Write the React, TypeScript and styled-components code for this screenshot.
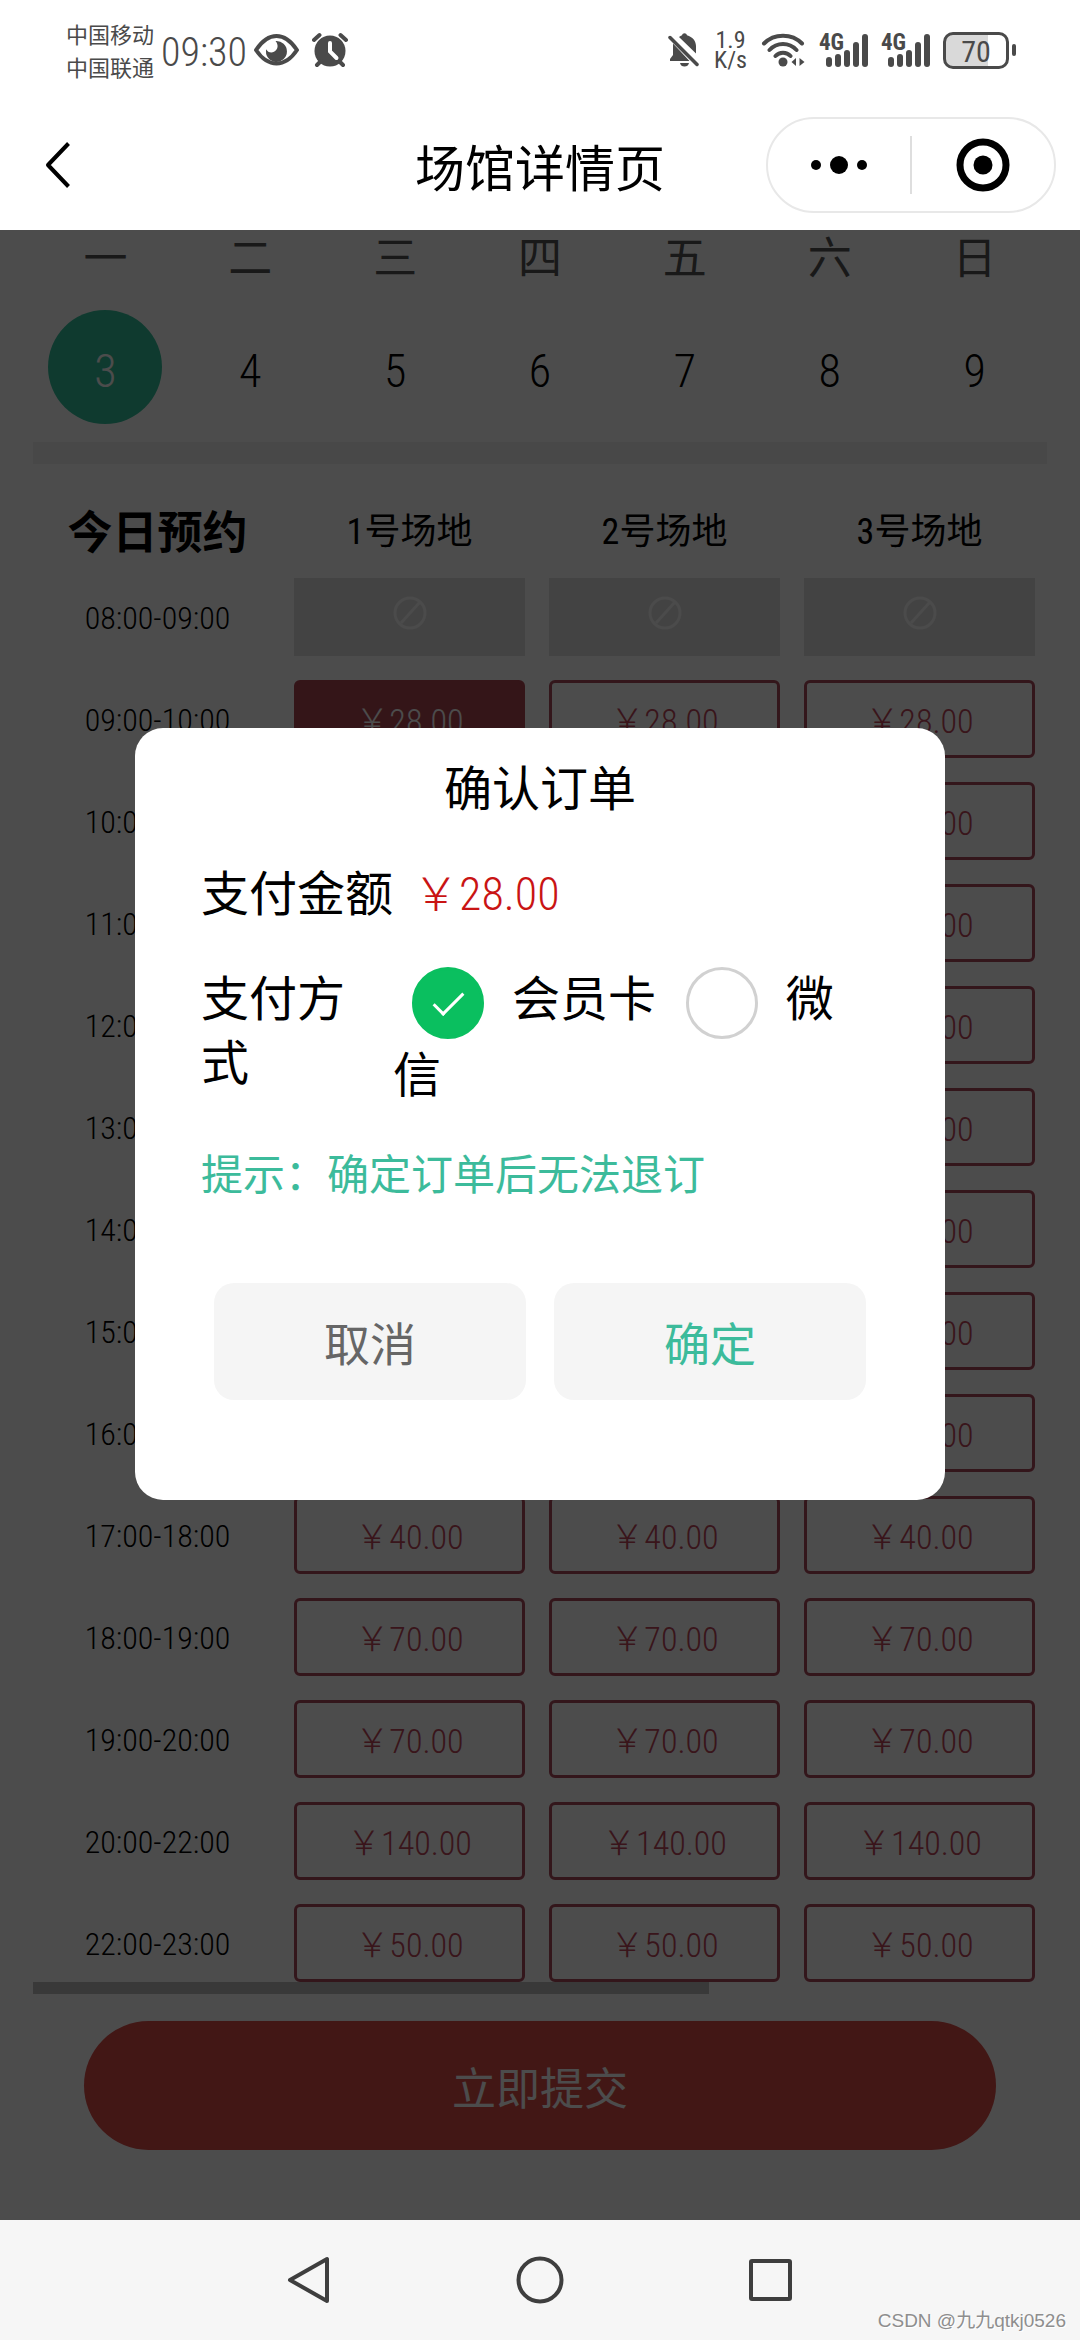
import React, { useState } from "react";
import styled, { createGlobalStyle } from "styled-components";

const GlobalStyle = createGlobalStyle`
  *, *::before, *::after { box-sizing: border-box; }
  body { margin: 0; background: #fff; }
  button, input { font: inherit; }
  button { margin: 0; padding: 0; border: 0; background: none; color: inherit; }
`;

const INK = "#4a4a4a";
const TEAL = "#3cbb9b";

const Screen = styled.div`
  display: flex;
  flex-direction: column;
  min-height: 100vh;
  font-family: "Noto Sans CJK SC", sans-serif;
  font-size: 48px;
  line-height: 64px;
  color: #000;
`;

/* condensed figures that share a line with Chinese text */
const Num = styled.span`
  font-family: "Roboto Condensed", "Liberation Sans Narrow", "Noto Sans CJK SC", sans-serif;
  line-height: 1;
`;

/* ---------- system status bar ---------- */

const StatusBar = styled.header`
  display: flex;
  align-items: center;
  justify-content: space-between;
  height: 100px;
  padding: 0 64px 0 66px;
  color: ${INK};
`;

const StatusGroup = styled.div<{ $gap: number }>`
  display: flex;
  align-items: center;
  gap: ${(p) => p.$gap}px;
`;

const Carriers = styled.div`
  display: flex;
  flex-direction: column;
  font-size: 22px;
  line-height: 33px;
`;

const Clock = styled.time`
  font-size: 40px;
  line-height: 44px;
  font-weight: 300;
`;

const NetSpeed = styled(Num)`
  display: flex;
  flex-direction: column;
  align-items: center;
  font-size: 24px;
  line-height: 20px;
`;

const Battery = styled.div`
  display: flex;
  align-items: center;
  gap: 3px;

  &::after {
    content: "";
    width: 4px;
    height: 12px;
    border-radius: 2px;
    background: ${INK};
  }
`;

const BatteryBody = styled(Num)`
  width: 66px;
  height: 37px;
  padding: 0 2px;
  border: 3px solid ${INK};
  border-radius: 10px;
  background: linear-gradient(90deg, #d9d9d9 70%, #fff 70%);
  font-size: 30px;
  line-height: 33px;
  text-align: center;
`;

/* ---------- mini program title bar ---------- */

const TitleBar = styled.div`
  display: grid;
  grid-template-columns: 1fr auto 1fr;
  align-items: center;
  height: 130px;
  padding: 0 24px;
`;

const BackButton = styled.button`
  display: flex;
  justify-self: start;
  margin-left: 20px;
`;

const PageTitle = styled.h1`
  margin: 0;
  font-size: 50px;
  font-weight: 400;
`;

const Capsule = styled.div`
  display: flex;
  align-items: center;
  justify-self: end;
  width: 290px;
  height: 96px;
  border: 2px solid #e8e8e8;
  border-radius: 48px;
`;

const CapsuleButton = styled.button`
  display: flex;
  flex: 1;
  align-items: center;
  justify-content: center;

  & + & {
    border-left: 2px solid #dedede;
    height: 58px;
  }
`;

/* ---------- booking page ---------- */

const Page = styled.main`
  position: relative;
  display: flex;
  flex: 1;
  flex-direction: column;
  padding: 0 33px;
  background: #fff;
`;

const Week = styled.div`
  display: grid;
  grid-template-columns: repeat(7, 1fr);
  justify-items: center;
`;

const Weekday = styled.span`
  font-size: 44px;
  line-height: 50px;
  color: #555;
`;

const Day = styled.button<{ $active: boolean }>`
  width: 114px;
  height: 114px;
  margin: 30px 0 18px;
  border-radius: 50%;
  background: ${(p) => (p.$active ? "#35c19d" : "none")};
  color: ${(p) => (p.$active ? "#fff" : "#000")};
  font-size: 46px;
  font-weight: 300;
`;

const Divider = styled.div`
  height: 22px;
  background: #f0f0f0;
`;

const Slots = styled.table`
  width: 100%;
  margin-top: 43px;
  border-collapse: collapse;
  table-layout: fixed;
`;

const CornerHead = styled.th`
  width: 249px;
  padding: 0 0 2px;
  font-size: 45px;
  line-height: 44px;
  font-weight: 700;
`;

const CourtHead = styled.th`
  padding: 0 0 4px;
  font-size: 36px;
  line-height: 42px;
  font-weight: 400;
`;

const TimeHead = styled.th`
  padding: 20px 0 0;
  font-size: 32px;
  line-height: 44px;
  font-weight: 300;
`;

const SlotCell = styled.td`
  height: 102px;
  padding: 24px 12px 0;
`;

const SlotButton = styled.button<{ $state: "free" | "picked" | "closed" }>`
  display: block;
  width: 100%;
  height: 78px;
  border: 3px solid ${(p) => ({ free: "#ac4a5c", picked: "#ad4653", closed: "#e0e0e0" })[p.$state]};
  border-radius: ${(p) => (p.$state === "closed" ? 0 : 6)}px;
  background: ${(p) => ({ free: "none", picked: "#ad4653", closed: "#e0e0e0" })[p.$state]};
  color: ${(p) => (p.$state === "picked" ? "#fff" : "#c0485a")};
  font-size: 34px;
  line-height: 44px;
  font-weight: 300;
`;

const ScrollThumb = styled.div`
  width: 66.67%;
  height: 12px;
  background: #bebebe;
`;

const SubmitButton = styled.button`
  height: 129px;
  margin: 27px 51px 70px;
  border-radius: 65px;
  background: #dc4d49;
  color: #fff;
  font-size: 44px;
`;

/* ---------- confirm dialog ---------- */

const Mask = styled.div`
  position: absolute;
  inset: 0;
  display: flex;
  align-items: flex-start;
  justify-content: center;
  padding-top: 498px;
  background: rgba(0, 0, 0, 0.7);
`;

const Dialog = styled.form`
  display: flex;
  flex-direction: column;
  gap: 41px;
  width: 75%;
  padding: 25px 66px 100px;
  border-radius: 28px;
  background: #fff;
`;

const DialogTitle = styled.h2`
  margin: 0;
  font-size: 48px;
  font-weight: 400;
  text-align: center;
`;

const Field = styled.div`
  display: flex;
`;

const Amount = styled.span`
  margin-left: 20px;
  color: #c91414;
  font-size: 46px;
  font-weight: 300;
`;

const MethodName = styled.span`
  flex: none;
  width: 180px;
  margin-right: 12px;
`;

const Methods = styled.div`
  flex: 1;
`;

const Radio = styled.input`
  position: relative;
  width: 72px;
  height: 72px;
  margin: 0 28px 0 19px;
  border: 3px solid #d1d1d1;
  border-radius: 50%;
  background: #fff;
  appearance: none;
  vertical-align: middle;

  &:checked {
    border-color: #0abf5f;
    background: #0abf5f;
  }

  &:checked::after {
    content: "";
    position: absolute;
    top: 15px;
    left: 26px;
    width: 15px;
    height: 30px;
    border: solid #fff;
    border-width: 0 3px 3px 0;
    transform: rotate(45deg);
  }
`;

const Hint = styled.p`
  margin: 0;
  color: ${TEAL};
  font-size: 42px;
  line-height: 56px;
`;

const Actions = styled.div`
  display: flex;
  gap: 28px;
  margin: 42px 13px 0;
`;

const ActionButton = styled.button<{ $primary?: boolean }>`
  flex: 1;
  height: 117px;
  border-radius: 20px;
  background: #f5f5f5;
  color: ${(p) => (p.$primary ? TEAL : "#666")};
  font-size: 46px;
`;

/* ---------- system navigation ---------- */

const SystemNav = styled.nav`
  position: relative;
  display: flex;
  align-items: center;
  justify-content: center;
  gap: 182px;
  height: 120px;
  background: #f6f6f6;
`;

const NavButton = styled.button`
  display: flex;
`;

const Watermark = styled.span`
  position: absolute;
  right: 14px;
  bottom: 6px;
  font-family: "Liberation Sans", "Noto Sans CJK SC", sans-serif;
  font-size: 19px;
  line-height: 26px;
  color: #8e8e8e;
  text-shadow: 1px 1px 0 #fff;
`;

/* ---------- icons ---------- */

const EyeIcon = () => (
  <svg width="45" height="32" viewBox="0 0 45 32" aria-hidden="true">
    <path d="M2 16C8 7 15 2 22.500 2S37 7 43 16C37 25 30 29.500 22.500 29.500S8 25 2 16Z" fill="none" stroke={INK} strokeWidth="4" strokeLinejoin="round" />
    <path d="M21.500 7A10.500 10.500 0 1 1 12.200 15.200C13.500 18 17 19.500 20 17.800C24.500 15.500 24.500 10 21.500 7Z" fill={INK} />
  </svg>
);

const AlarmIcon = () => (
  <svg width="36" height="36" viewBox="0 0 36 36" fill="none" stroke={INK} strokeLinecap="round" aria-hidden="true">
    <circle cx="18" cy="19" r="15.500" fill={INK} stroke="none" />
    <path d="M2 8L7.500 3M34 8L28.500 3M5 33L9 29M31 33L27 29" strokeWidth="4" />
    <path d="M18 11V19.500L24.500 26" stroke="#fff" strokeWidth="4" />
  </svg>
);

const MutedBellIcon = () => (
  <svg width="32" height="36" viewBox="0 0 32 36" aria-hidden="true">
    <path d="M2 29V27L5 23V11.500L21.500 29ZM11 5C12 4 13 3.500 14 3.200C14.500 0.500 18.500 0.500 19 3.200C24.500 4.800 28 9 28 14V21.500ZM12 31H21C20.500 33.500 18.800 34.500 16.500 34.500S12.500 33.500 12 31Z" fill={INK} />
    <path d="M2 5.500L29 32.500" stroke={INK} strokeWidth="3.500" strokeLinecap="round" />
  </svg>
);

const WifiIcon = () => (
  <svg width="44" height="36" viewBox="0 0 44 36" fill="none" stroke={INK} strokeWidth="4" strokeLinecap="round" aria-hidden="true">
    <path d="M3 11.500C13 1 31 1 41 11.500M8.500 18C16 10 28 10 35.500 18M14.500 24C18.500 19.500 25.500 19.500 29.500 24" />
    <circle cx="22" cy="30" r="4.500" fill={INK} stroke="none" />
    <path d="M35 26V34L30.500 30ZM38.500 26V34L43.500 30Z" fill={INK} stroke="none" />
  </svg>
);

const SignalBox = styled.svg`
  overflow: visible;
`;

const SignalIcon = () => (
  <SignalBox width="50" height="36" viewBox="0 0 50 36" aria-hidden="true">
    <text x="0" y="18" fill={INK} fontFamily="Roboto Condensed, Liberation Sans Narrow, sans-serif" fontSize="23" fontWeight="700">4G</text>
    {[25, 22, 18, 10, 2].map((top, i) => (
      <rect key={top} x={7 + i * 9} y={top} width="6" height={35 - top} rx="3" fill={INK} />
    ))}
  </SignalBox>
);

const BackIcon = () => (
  <svg width="28" height="48" viewBox="0 0 28 48" fill="none" stroke="#000" strokeWidth="4" strokeLinejoin="round" aria-hidden="true">
    <path d="M24.500 2.500L4 24L24.500 45.500" />
  </svg>
);

const MoreIcon = () => (
  <svg width="58" height="20" viewBox="0 0 58 20" aria-hidden="true">
    <circle cx="6" cy="10" r="5" />
    <circle cx="29" cy="10" r="9" />
    <circle cx="52" cy="10" r="5" />
  </svg>
);

const TargetIcon = () => (
  <svg width="54" height="54" viewBox="0 0 54 54" aria-hidden="true">
    <circle cx="27" cy="27" r="23" fill="none" stroke="#000" strokeWidth="7" />
    <circle cx="27" cy="27" r="9.500" />
  </svg>
);

const ClosedIcon = () => (
  <svg width="40" height="40" viewBox="0 0 40 40" fill="none" stroke="#fafafa" strokeWidth="3" aria-label="不可预约" role="img">
    <circle cx="20" cy="20" r="15" />
    <path d="M11 30L30 9" />
  </svg>
);

/* ---------- data ---------- */

const weekdays = ["一", "二", "三", "四", "五", "六", "日"];
const dates = [3, 4, 5, 6, 7, 8, 9];
const courts = ["1号场地", "2号场地", "3号场地"];
const slots: { time: string; price?: string }[] = [
  { time: "08:00-09:00" },
  { time: "09:00-10:00", price: "28.00" },
  { time: "10:00-11:00", price: "28.00" },
  { time: "11:00-12:00", price: "28.00" },
  { time: "12:00-13:00", price: "28.00" },
  { time: "13:00-14:00", price: "28.00" },
  { time: "14:00-15:00", price: "40.00" },
  { time: "15:00-16:00", price: "40.00" },
  { time: "16:00-17:00", price: "40.00" },
  { time: "17:00-18:00", price: "40.00" },
  { time: "18:00-19:00", price: "70.00" },
  { time: "19:00-20:00", price: "70.00" },
  { time: "20:00-22:00", price: "140.00" },
  { time: "22:00-23:00", price: "50.00" },
];

export default function App() {
  const [day, setDay] = useState(3);
  const [method, setMethod] = useState("card");

  return (
    <Screen>
      <GlobalStyle />
      <StatusBar>
        <StatusGroup $gap={7}>
          <Carriers>
            <span>中国移动</span>
            <span>中国联通</span>
          </Carriers>
          <Clock>
            <Num>09:30</Num>
          </Clock>
          <StatusGroup $gap={13}>
            <EyeIcon />
            <AlarmIcon />
          </StatusGroup>
        </StatusGroup>
        <StatusGroup $gap={14}>
          <MutedBellIcon />
          <NetSpeed>
            <span>1.9</span>
            <span>K/s</span>
          </NetSpeed>
          <WifiIcon />
          <StatusGroup $gap={12}>
            <SignalIcon />
            <SignalIcon />
            <Battery>
              <BatteryBody>70</BatteryBody>
            </Battery>
          </StatusGroup>
        </StatusGroup>
      </StatusBar>

      <TitleBar>
        <BackButton type="button" aria-label="返回">
          <BackIcon />
        </BackButton>
        <PageTitle>场馆详情页</PageTitle>
        <Capsule>
          <CapsuleButton type="button" aria-label="更多">
            <MoreIcon />
          </CapsuleButton>
          <CapsuleButton type="button" aria-label="关闭">
            <TargetIcon />
          </CapsuleButton>
        </Capsule>
      </TitleBar>

      <Page>
        <Week>
          {weekdays.map((name) => (
            <Weekday key={name}>{name}</Weekday>
          ))}
          {dates.map((date) => (
            <Day key={date} type="button" $active={date === day} onClick={() => setDay(date)}>
              <Num>{date}</Num>
            </Day>
          ))}
        </Week>
        <Divider />

        <Slots>
          <thead>
            <tr>
              <CornerHead scope="col">今日预约</CornerHead>
              {courts.map((court) => (
                <CourtHead key={court} scope="col">
                  <Num>{court}</Num>
                </CourtHead>
              ))}
            </tr>
          </thead>
          <tbody>
            {slots.map(({ time, price }, row) => (
              <tr key={time}>
                <TimeHead scope="row">
                  <Num>{time}</Num>
                </TimeHead>
                {courts.map((court, col) => (
                  <SlotCell key={court}>
                    {price ? (
                      <SlotButton type="button" $state={row === 1 && col === 0 ? "picked" : "free"}>
                        <Num>￥{price}</Num>
                      </SlotButton>
                    ) : (
                      <SlotButton type="button" $state="closed" disabled>
                        <ClosedIcon />
                      </SlotButton>
                    )}
                  </SlotCell>
                ))}
              </tr>
            ))}
          </tbody>
        </Slots>
        <ScrollThumb />
        <SubmitButton type="button">立即提交</SubmitButton>

        <Mask>
          <Dialog role="dialog" aria-labelledby="confirm-title">
            <DialogTitle id="confirm-title">确认订单</DialogTitle>
            <Field>
              <span>支付金额</span>
              <Amount>
                <Num>￥28.00</Num>
              </Amount>
            </Field>
            <Field>
              <MethodName id="method-name">支付方式</MethodName>
              <Methods role="radiogroup" aria-labelledby="method-name">
                <label>
                  <Radio type="radio" name="method" checked={method === "card"} onChange={() => setMethod("card")} />
                  会员卡
                </label>{" "}
                <label>
                  <Radio type="radio" name="method" checked={method === "wechat"} onChange={() => setMethod("wechat")} />
                  微信
                </label>
              </Methods>
            </Field>
            <Hint>提示：确定订单后无法退订</Hint>
            <Actions>
              <ActionButton type="button">取消</ActionButton>
              <ActionButton type="button" $primary>确定</ActionButton>
            </Actions>
          </Dialog>
        </Mask>
      </Page>

      <SystemNav>
        <NavButton type="button" aria-label="返回">
          <svg width="48" height="50" viewBox="0 0 48 50" fill="none" stroke="#3e3e3e" strokeWidth="4" strokeLinejoin="round">
            <path d="M42 4V46L5 25Z" />
          </svg>
        </NavButton>
        <NavButton type="button" aria-label="主页">
          <svg width="50" height="50" viewBox="0 0 50 50" fill="none" stroke="#3e3e3e" strokeWidth="4">
            <circle cx="25" cy="25" r="21.500" />
          </svg>
        </NavButton>
        <NavButton type="button" aria-label="最近任务">
          <svg width="48" height="50" viewBox="0 0 48 50" fill="none" stroke="#3e3e3e" strokeWidth="4" strokeLinejoin="round">
            <rect x="4" y="6" width="39" height="38" rx="1" />
          </svg>
        </NavButton>
        <Watermark>CSDN @九九qtkj0526</Watermark>
      </SystemNav>
    </Screen>
  );
}
